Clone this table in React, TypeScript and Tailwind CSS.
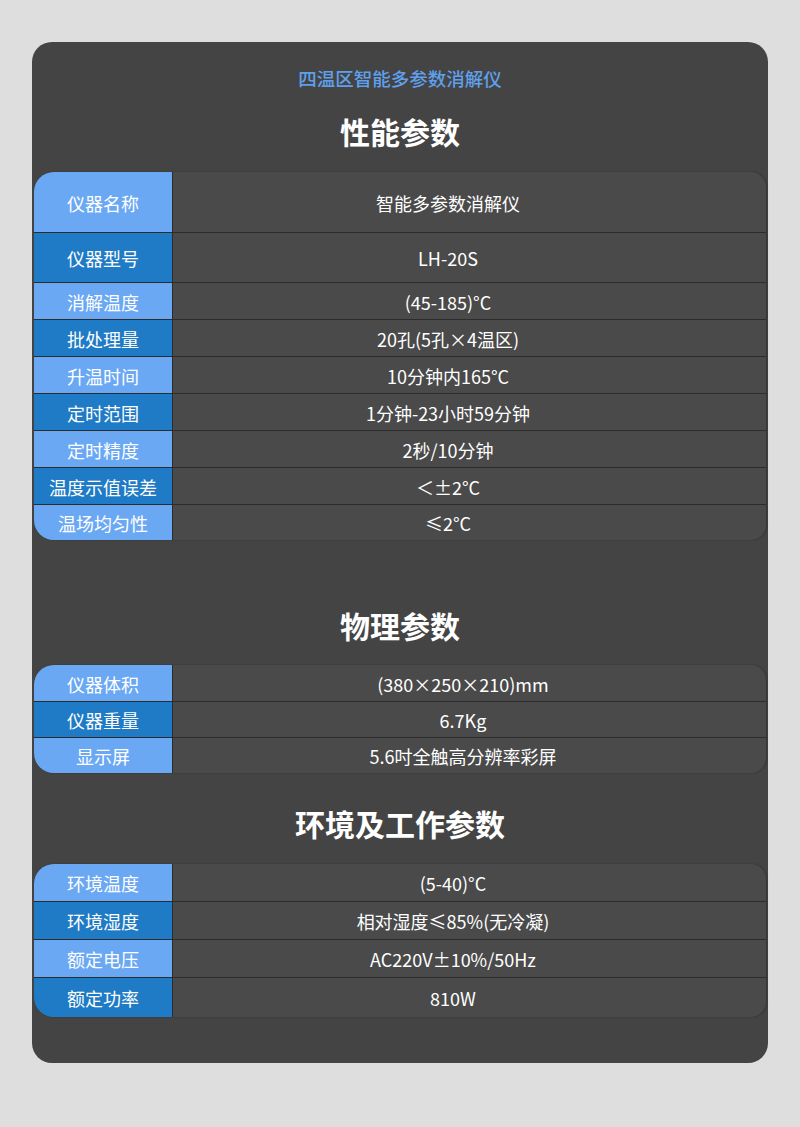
import React from 'react'

type Row = { label: string; value: string; h: string }

const perf: Row[] = [
  { label: '仪器名称', value: '智能多参数消解仪', h: 'h-[61px]' },
  { label: '仪器型号', value: 'LH-20S', h: 'h-[50px]' },
  { label: '消解温度', value: '(45-185)°C', h: 'h-[37px]' },
  { label: '批处理量', value: '20孔(5孔×4温区)', h: 'h-[37px]' },
  { label: '升温时间', value: '10分钟内165°C', h: 'h-[37px]' },
  { label: '定时范围', value: '1分钟-23小时59分钟', h: 'h-[37px]' },
  { label: '定时精度', value: '2秒/10分钟', h: 'h-[37px]' },
  { label: '温度示值误差', value: '＜±2°C', h: 'h-[37px]' },
  { label: '温场均匀性', value: '≤2°C', h: 'h-[35px]' },
]

const physical: Row[] = [
  { label: '仪器体积', value: '(380×250×210)mm', h: 'h-[37px]' },
  { label: '仪器重量', value: '6.7Kg', h: 'h-[36px]' },
  { label: '显示屏', value: '5.6吋全触高分辨率彩屏', h: 'h-[35px]' },
]

const env: Row[] = [
  { label: '环境温度', value: '(5-40)°C', h: 'h-[38px]' },
  { label: '环境湿度', value: '相对湿度≤85%(无冷凝)', h: 'h-[38px]' },
  { label: '额定电压', value: 'AC220V±10%/50Hz', h: 'h-[38px]' },
  { label: '额定功率', value: '810W', h: 'h-[39px]' },
]

const SpecTable = ({ rows, valuePad }: { rows: Row[]; valuePad: string }) => (
  <div className="mx-[2px] rounded-tl-[20px] rounded-bl-[20px] rounded-tr-[15px] rounded-br-[15px] overflow-hidden bg-[#4a4a4a] shadow-[1px_0_2px_rgba(0,0,0,0.25)]">
    {rows.map((row, i) => (
      <div
        key={row.label}
        className={`grid grid-cols-[139px_1fr] ${row.h} ${i < rows.length - 1 ? 'border-b border-[#2c2c2c]' : ''}`}
      >
        <div
          className={`flex items-center justify-center pt-[2px] border-r border-[#2c2c2c] text-white text-[18px] ${i % 2 === 0 ? 'bg-[#6aa8f4]' : 'bg-[#1f7bc5]'}`}
        >
          {row.label}
        </div>
        <div className={`flex items-center justify-center pt-[2px] ${valuePad} text-white text-[18px]`}>{row.value}</div>
      </div>
    ))}
  </div>
)

const SectionTitle = ({ children, className }: { children: React.ReactNode; className: string }) => (
  <h2 className={`text-center text-white text-[30px] leading-[40px] font-bold ${className}`}>{children}</h2>
)

export default function App() {
  return (
    <div
      className="bg-[#dedede] w-[800px] min-h-[1127px] pt-[42px]"
      style={{ fontFamily: '"Noto Sans CJK SC", "Noto Sans", sans-serif' }}
    >
      <div className="mx-[32px] bg-[#444444] rounded-[20px] pt-[24px] pb-[46px]">
        <p className="text-center text-[#5fa0ec] text-[18.5px] leading-[24px] font-medium">四温区智能多参数消解仪</p>
        <SectionTitle className="mt-[21px]">性能参数</SectionTitle>
        <div className="mt-[21px]">
          <SpecTable rows={perf} valuePad="pr-[43px]" />
        </div>
        <SectionTitle className="mt-[65px]">物理参数</SectionTitle>
        <div className="mt-[20px]">
          <SpecTable rows={physical} valuePad="pr-[13px]" />
        </div>
        <SectionTitle className="mt-[30px]">环境及工作参数</SectionTitle>
        <div className="mt-[21px]">
          <SpecTable rows={env} valuePad="pr-[33px]" />
        </div>
      </div>
    </div>
  )
}
